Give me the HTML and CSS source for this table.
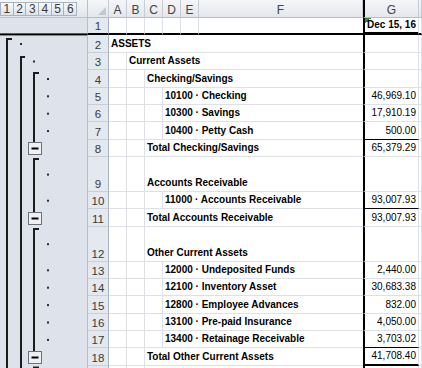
FILE: index.html
```html
<!DOCTYPE html>
<html lang="en">
<head>
    <meta charset="utf-8" />
    <title>Balance Sheet - Excel export</title>
    <link rel="stylesheet" href="styles.css">
</head>
<body>
    <div class="sheet">
        <aside class="outline">
            <div class="levels">
                <span>1</span><span>2</span><span>3</span><span>4</span><span>5</span><span>6</span>
            </div>
            <!-- outline bars, drawn in page coordinates -->
            <svg class="bars" width="87" height="350" viewBox="0 18 87 350">
                <rect class="freeze" x="0" y="33.4" width="87" height="2" />
                <path class="bar" d="M12 39H7V368" />
                <path class="bar" d="M25 57H21V368" />
                <path class="bar" d="M39 73H34V142" />
                <path class="bar" d="M39 159H34V212" />
                <path class="bar" d="M39 229H34V351" />
                <path class="bar" d="M39 367.5H34V370" />

                <rect class="dot" x="20" y="43" width="2" height="2" />
                <rect class="dot" x="33" y="60.5" width="2" height="2" />
                <rect class="dot" x="47" y="78" width="2" height="2" />
                <rect class="dot" x="47" y="95.3" width="2" height="2" />
                <rect class="dot" x="47" y="112.7" width="2" height="2" />
                <rect class="dot" x="47" y="130.1" width="2" height="2" />
                <rect class="dot" x="47" y="173.6" width="2" height="2" />
                <rect class="dot" x="47" y="199.7" width="2" height="2" />
                <rect class="dot" x="47" y="243.2" width="2" height="2" />
                <rect class="dot" x="47" y="269.3" width="2" height="2" />
                <rect class="dot" x="47" y="286.7" width="2" height="2" />
                <rect class="dot" x="47" y="304.1" width="2" height="2" />
                <rect class="dot" x="47" y="321.5" width="2" height="2" />
                <rect class="dot" x="47" y="338.9" width="2" height="2" />

                <g class="btn">
                    <rect x="28.5" y="142.5" width="13" height="12" />
                    <path d="M31.5 148.5h7" />
                </g>
                <g class="btn">
                    <rect x="28.5" y="212.5" width="13" height="12" />
                    <path d="M31.5 218.5h7" />
                </g>
                <g class="btn">
                    <rect x="28.5" y="351.5" width="13" height="12" />
                    <path d="M31.5 357.5h7" />
                </g>
            </svg>
        </aside>

        <div class="grid">
            <div class="row head">
                <div class="corner">
                    <svg width="8" height="8" viewBox="0 0 8 8"><path d="M8 0V8H0Z" /></svg>
                </div>
                <div class="col">A</div>
                <div class="col">B</div>
                <div class="col">C</div>
                <div class="col">D</div>
                <div class="col">E</div>
                <div class="col">F</div>
                <div class="col g">G</div>
                <div class="col h"></div>
            </div>

            <div class="row r1">
                <div class="rh">1</div>
                <div class="c"></div><div class="c"></div><div class="c"></div>
                <div class="c"></div><div class="c"></div><div class="c f"></div>
                <div class="amt date">Dec 15, 16</div>
                <div class="c h"></div>
            </div>

            <div class="row">
                <div class="rh">2</div>
                <div class="label lv1">ASSETS</div>
                <div class="amt"></div><div class="c h"></div>
            </div>

            <div class="row">
                <div class="rh">3</div>
                <div class="c"></div>
                <div class="label lv2">Current Assets</div>
                <div class="amt"></div><div class="c h"></div>
            </div>

            <div class="row">
                <div class="rh">4</div>
                <div class="c"></div><div class="c"></div>
                <div class="label lv3">Checking/Savings</div>
                <div class="amt"></div><div class="c h"></div>
            </div>

            <div class="row">
                <div class="rh">5</div>
                <div class="c"></div><div class="c"></div><div class="c"></div>
                <div class="label lv4">10100 · Checking</div>
                <div class="amt">46,969.10</div><div class="c h"></div>
            </div>

            <div class="row">
                <div class="rh">6</div>
                <div class="c"></div><div class="c"></div><div class="c"></div>
                <div class="label lv4">10300 · Savings</div>
                <div class="amt">17,910.19</div><div class="c h"></div>
            </div>

            <div class="row">
                <div class="rh">7</div>
                <div class="c"></div><div class="c"></div><div class="c"></div>
                <div class="label lv4">10400 · Petty Cash</div>
                <div class="amt ul">500.00</div><div class="c h"></div>
            </div>

            <div class="row">
                <div class="rh">8</div>
                <div class="c"></div><div class="c"></div>
                <div class="label lv3">Total Checking/Savings</div>
                <div class="amt">65,379.29</div><div class="c h"></div>
            </div>

            <div class="row tall">
                <div class="rh">9</div>
                <div class="c"></div><div class="c"></div>
                <div class="label lv3">Accounts Receivable</div>
                <div class="amt"></div><div class="c h"></div>
            </div>

            <div class="row">
                <div class="rh">10</div>
                <div class="c"></div><div class="c"></div><div class="c"></div>
                <div class="label lv4">11000 · Accounts Receivable</div>
                <div class="amt ul">93,007.93</div><div class="c h"></div>
            </div>

            <div class="row">
                <div class="rh">11</div>
                <div class="c"></div><div class="c"></div>
                <div class="label lv3">Total Accounts Receivable</div>
                <div class="amt">93,007.93</div><div class="c h"></div>
            </div>

            <div class="row tall">
                <div class="rh">12</div>
                <div class="c"></div><div class="c"></div>
                <div class="label lv3">Other Current Assets</div>
                <div class="amt"></div><div class="c h"></div>
            </div>

            <div class="row">
                <div class="rh">13</div>
                <div class="c"></div><div class="c"></div><div class="c"></div>
                <div class="label lv4">12000 · Undeposited Funds</div>
                <div class="amt">2,440.00</div><div class="c h"></div>
            </div>

            <div class="row">
                <div class="rh">14</div>
                <div class="c"></div><div class="c"></div><div class="c"></div>
                <div class="label lv4">12100 · Inventory Asset</div>
                <div class="amt">30,683.38</div><div class="c h"></div>
            </div>

            <div class="row">
                <div class="rh">15</div>
                <div class="c"></div><div class="c"></div><div class="c"></div>
                <div class="label lv4">12800 · Employee Advances</div>
                <div class="amt">832.00</div><div class="c h"></div>
            </div>

            <div class="row">
                <div class="rh">16</div>
                <div class="c"></div><div class="c"></div><div class="c"></div>
                <div class="label lv4">13100 · Pre-paid Insurance</div>
                <div class="amt">4,050.00</div><div class="c h"></div>
            </div>

            <div class="row">
                <div class="rh">17</div>
                <div class="c"></div><div class="c"></div><div class="c"></div>
                <div class="label lv4">13400 · Retainage Receivable</div>
                <div class="amt ul">3,703.02</div><div class="c h"></div>
            </div>

            <div class="row">
                <div class="rh">18</div>
                <div class="c"></div><div class="c"></div>
                <div class="label lv3">Total Other Current Assets</div>
                <div class="amt total">41,708.40</div><div class="c h"></div>
            </div>

            <!-- next row, only its top edge is in view -->
            <div class="row">
                <div class="rh"></div>
                <div class="c"></div><div class="c"></div>
                <div class="label lv3"></div>
                <div class="amt"></div><div class="c h"></div>
            </div>
        </div>
    </div>
</body>
</html>
```

FILE: styles.css
```css
* {
    margin: 0;
    padding: 0;
    box-sizing: border-box;
}

body {
    width: 422px;
    height: 368px;
    overflow: hidden;
    background: #fff;
    font-family: "Liberation Sans", Arial, sans-serif;
    font-size: 10px;
    color: #000;
}

.sheet {
    display: flex;
    height: 368px;
}

/* outline panel on the left */
.outline {
    width: 87px;
    flex: none;
    background: #dde2eb;
    display: flex;
    flex-direction: column;
}

.levels {
    height: 18px;
    flex: none;
    display: flex;
    align-items: flex-start;
    padding-top: 2px;
    background: linear-gradient(#f3f5f8, #e2e6ec);
    border-bottom: 1px solid #b9c2cf;
}

.levels span {
    width: 13.7px;
    height: 14px;
    border: 1px solid #a9b2c0;
    margin-right: -1px;
    background: linear-gradient(#f8f9fb, #dde2ea);
    font-size: 12px;
    line-height: 12px;
    text-align: center;
    color: #3a3a3a;
}

.bars {
    display: block;
    flex: none;
}

.bars .freeze { fill: #000; }
.bars .bar { fill: none; stroke: #1c1c1c; stroke-width: 2; }
.bars .dot { fill: #2b2b2b; }
.bars .btn rect { fill: #eef0f4; stroke: #6a717d; stroke-width: 1; }
.bars .btn path { stroke: #000; stroke-width: 2; }

/* worksheet */
.grid {
    flex: 1;
    min-width: 0;
}

.row {
    display: grid;
    grid-template-columns: 22px repeat(5, 18px) 164px 56px 1fr;
    height: 17.4px;
}

.row.tall {
    height: 34.8px;
}

.row > div {
    display: flex;
    align-items: flex-end;
    border-bottom: 1px solid #dde1e7;
    border-right: 1px solid #dde1e7;
    white-space: nowrap;
    overflow: hidden;
}

.head {
    height: 18px;
    background: linear-gradient(#f5f6f8, #e2e6ec);
}

.head > div {
    border-bottom: 1px solid #b3bdca !important;
    border-right: 1px solid #c5ccd6 !important;
}

.head .corner {
    justify-content: flex-end;
    padding: 0 2px 2px 0;
    border-left: 1px solid #b6bfcc;
}

.corner svg path { fill: #c1c8d3; }

.head .col {
    justify-content: center;
    align-items: flex-start;
    padding-top: 2px;
    font-size: 12px;
    line-height: 16px;
    color: #444;
}

.head .col.g {
    border-left: 2px solid #000;
}

.row .rh {
    justify-content: center;
    background: #e4e8ef;
    border-left: 1px solid #b6bfcc;
    border-right: 1px solid #a6b1c1;
    border-bottom: 1px solid #c9cfd9;
    padding-bottom: 1px;
    font-size: 11.5px;
    line-height: 11px;
    color: #3a3a3a;
}

.label {
    padding: 0 0 2px 2px;
    line-height: 12px;
    font-weight: bold;
    border-right: none !important;
}

.lv1 { grid-column: 2 / 8; }
.lv2 { grid-column: 3 / 8; }
.lv3 { grid-column: 4 / 8; }
.lv4 { grid-column: 5 / 8; }

.c.f {
    border-right: none !important;
}

.amt {
    justify-content: flex-end;
    padding: 0 2px 2px 0;
    line-height: 12px;
    border-left: 2px solid #000;
}

.amt.ul {
    border-bottom: 1px solid #000 !important;
}

.amt.total {
    border-bottom: 2px solid #000 !important;
}

.r1 > div {
    border-bottom: 2px solid #000 !important;
}

.amt.date {
    justify-content: center;
    padding: 0 0 1px;
    font-weight: bold;
    border-bottom: 3px solid #000 !important;
    background: linear-gradient(135deg, #2f8b35 50%, transparent 50%) 0 0 / 6px 6px no-repeat;
}
```
